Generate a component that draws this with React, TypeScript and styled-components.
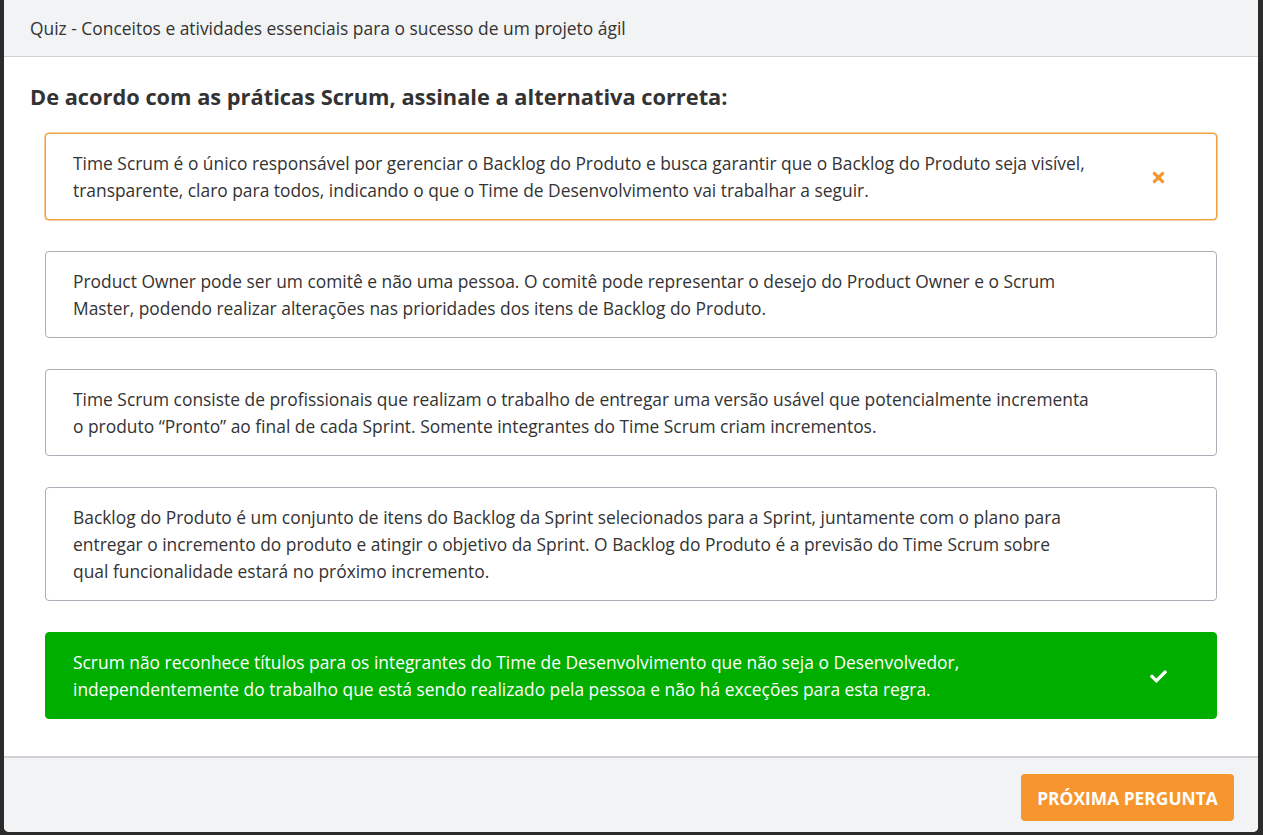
import React from "react";
import styled, { createGlobalStyle } from "styled-components";
import { FaTimes, FaCheck } from "react-icons/fa";

const Global = createGlobalStyle`
  html, body { margin: 0; padding: 0; background: #2b2b2b; }
  body { font-family: "Open Sans", "Noto Sans", sans-serif; color: #333; }
  * { box-sizing: border-box; }
`;

const Page = styled.div`
  height: 835px;
  padding: 0 5px 3px 4px;
  display: flex;
`;

const Modal = styled.div`
  flex: 1;
  display: flex;
  flex-direction: column;
  background: #fff;
  border-radius: 0 0 5px 5px;
  overflow: hidden;
`;

const Header = styled.div`
  height: 57px;
  background: #f2f3f5;
  border-bottom: 1px solid #cfd1d4;
  display: flex;
  align-items: center;
  padding: 0 26px;
  font-size: 17.4px;
  color: #333;
`;

const Body = styled.div`
  flex: 1;
  padding: 20px 41px 0 26px;
`;

const Question = styled.h2`
  margin: 0 0 16px 0;
  font-size: 21.8px;
  font-weight: 700;
  line-height: 40px;
  color: #333;
`;

const Options = styled.div`
  display: flex;
  flex-direction: column;
  gap: 31px;
  padding-left: 15px;
`;

type Variant = "wrong" | "right" | "neutral";

const Option = styled.div<{ $variant: Variant }>`
  display: flex;
  align-items: center;
  border-radius: 4px;
  padding: 16px 0 15px 27px;
  font-size: 17.4px;
  line-height: 27px;
  border: 1px solid
    ${(p) =>
      p.$variant === "wrong" ? "#f0a040" : p.$variant === "right" ? "#00ae00" : "#a9afb6"};
  box-shadow: ${(p) => (p.$variant === "wrong" ? "0 0 0 0.6px #f3a448" : "none")};
  background: ${(p) => (p.$variant === "right" ? "#00ae00" : "#fff")};
  color: ${(p) => (p.$variant === "right" ? "#fff" : "#333")};
  font-weight: ${(p) => (p.$variant === "right" ? 500 : 400)};
`;

const OptionText = styled.div`
  flex: 1;
  padding-right: 10.6px;
`;

const IconCell = styled.div<{ $variant: Variant }>`
  width: 116px;
  flex: none;
  display: flex;
  justify-content: center;
  font-size: 17px;
  color: ${(p) => (p.$variant === "right" ? "#fff" : "#f7962f")};
`;

const Footer = styled.div`
  height: 76px;
  background: #f2f3f5;
  border-top: 2px solid #cfd1d4;
  display: flex;
  justify-content: flex-end;
  align-items: flex-start;
  padding: 16px 24px 0 0;
`;

const NextButton = styled.button`
  width: 213px;
  height: 47px;
  border: none;
  border-radius: 4px;
  background: #f7962f;
  color: #fff;
  font-family: "Open Sans", sans-serif;
  font-weight: 700;
  font-size: 17.4px;
  text-transform: uppercase;
  cursor: pointer;
`;

const options: { text: string; variant: Variant }[] = [
  {
    text: "Time Scrum é o único responsável por gerenciar o Backlog do Produto e busca garantir que o Backlog do Produto seja visível, transparente, claro para todos, indicando o que o Time de Desenvolvimento vai trabalhar a seguir.",
    variant: "wrong",
  },
  {
    text: "Product Owner pode ser um comitê e não uma pessoa. O comitê pode representar o desejo do Product Owner e o Scrum Master, podendo realizar alterações nas prioridades dos itens de Backlog do Produto.",
    variant: "neutral",
  },
  {
    text: "Time Scrum consiste de profissionais que realizam o trabalho de entregar uma versão usável que potencialmente incrementa o produto “Pronto” ao final de cada Sprint. Somente integrantes do Time Scrum criam incrementos.",
    variant: "neutral",
  },
  {
    text: "Backlog do Produto é um conjunto de itens do Backlog da Sprint selecionados para a Sprint, juntamente com o plano para entregar o incremento do produto e atingir o objetivo da Sprint. O Backlog do Produto é a previsão do Time Scrum sobre qual funcionalidade estará no próximo incremento.",
    variant: "neutral",
  },
  {
    text: "Scrum não reconhece títulos para os integrantes do Time de Desenvolvimento que não seja o Desenvolvedor, independentemente do trabalho que está sendo realizado pela pessoa e não há exceções para esta regra.",
    variant: "right",
  },
];

export default function App() {
  return (
    <>
      <Global />
      <Page>
        <Modal>
          <Header>Quiz - Conceitos e atividades essenciais para o sucesso de um projeto ágil</Header>
          <Body>
            <Question>De acordo com as práticas Scrum, assinale a alternativa correta:</Question>
            <Options>
              {options.map((o, i) => (
                <Option key={i} $variant={o.variant}>
                  <OptionText>{o.text}</OptionText>
                  <IconCell $variant={o.variant}>
                    {o.variant === "wrong" && <FaTimes />}
                    {o.variant === "right" && <FaCheck />}
                  </IconCell>
                </Option>
              ))}
            </Options>
          </Body>
          <Footer>
            <NextButton>Próxima pergunta</NextButton>
          </Footer>
        </Modal>
      </Page>
    </>
  );
}
